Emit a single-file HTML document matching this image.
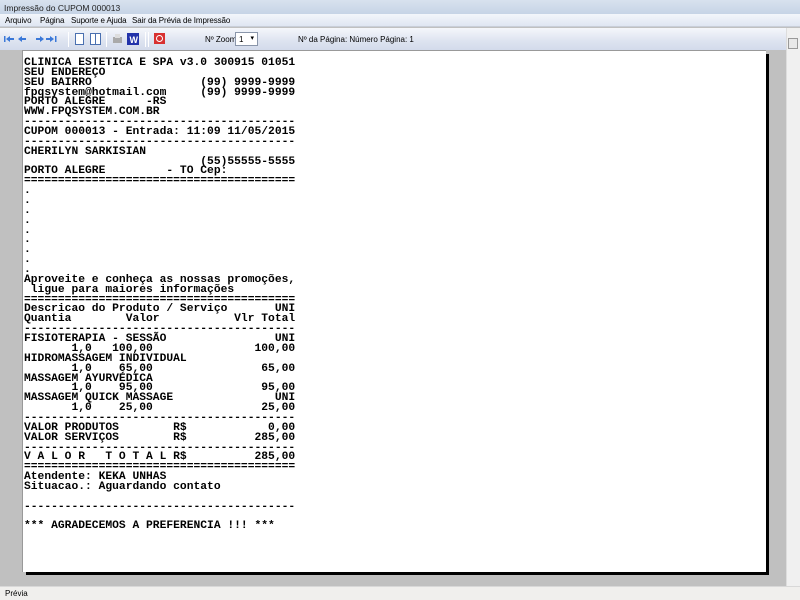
<!DOCTYPE html>
<html><head><meta charset="utf-8"><style>
*{margin:0;padding:0;box-sizing:border-box}
body{width:800px;height:600px;overflow:hidden;background:#c0c0c0;font-family:"Liberation Sans",sans-serif;font-size:8px;color:#000;position:relative}
.title{position:absolute;left:0;top:0;width:800px;height:14px;background:linear-gradient(#d8e2ee,#c6d4e6);font-size:8.5px;padding:3px 0 0 4px;color:#222}
.menu{position:absolute;left:0;top:14px;width:800px;height:13px;background:linear-gradient(#f3f6fb,#dfe6f2);border-bottom:1px solid #c8ced8}
.menu span{position:absolute;top:2px;letter-spacing:-0.1px}
.tb{position:absolute;left:0;top:28px;width:786px;height:22px;background:linear-gradient(#f5f7fb,#dde3f0 60%,#d3dbeb)}
.tb .i{position:absolute}
.sep{position:absolute;top:4px;width:1px;height:15px;background:#a9b4c8;border-right:1px solid #fff}
.area{position:absolute;left:0;top:50px;width:786px;height:536px;background:#c0c0c0}
.page{position:absolute;left:22px;top:50px;width:744px;height:522px;background:#fff;border-left:1px solid #999;border-top:1px solid #999}
.shr{position:absolute;left:766px;top:54px;width:3px;height:521px;background:#000}
.shb{position:absolute;left:26px;top:572px;width:743px;height:3px;background:#000}
pre{position:absolute;left:24px;top:59px;font-family:"Liberation Mono",monospace;font-weight:bold;font-size:11.3px;line-height:9.86px;color:#000}
.sb{position:absolute;left:786px;top:28px;width:14px;height:558px;background:#f0f0f0;border-left:1px solid #ddd}
.thumb{position:absolute;left:788px;top:38px;width:10px;height:11px;border:1px solid #999;background:#e8e8e8}
.status{position:absolute;left:0;top:586px;width:800px;height:14px;background:#f0efed;border-top:1px solid #d8d8d8;padding:2px 0 0 5px}
.sel{position:absolute;left:235px;top:4px;width:23px;height:14px;border:1px solid #8a96aa;background:#fff;font-size:8px;padding:2px 0 0 3px}
</style></head><body>
<div class="title">Impressão do CUPOM 000013</div>
<div class="menu"><span style="left:5px">Arquivo</span><span style="left:40px">Página</span><span style="left:71px">Suporte e Ajuda</span><span style="left:132px">Sair da Prévia de Impressão</span></div>
<div class="tb">
<svg class="i" style="left:3px;top:6px" width="56" height="10"><g fill="#3a78d8"><rect x="1" y="2" width="1.5" height="6"/><path d="M3 5l4-3v2h4v2H7v2z"/><path d="M15 5l4-3v2h4v2h-4v2z"/><path d="M41 5l-4-3v2h-4v2h4v2z"/><path d="M51 5l-4-3v2h-4v2h4v2z"/><rect x="52" y="2" width="1.5" height="6"/></g></svg>
<div class="sep" style="left:68px"></div>
<svg class="i" style="left:74px;top:4px" width="28" height="14"><rect x="1.5" y="1.5" width="8" height="11" fill="#fff" stroke="#4a70b0"/><rect x="16.5" y="1.5" width="10" height="11" fill="#fff" stroke="#4a70b0"/><line x1="21.5" y1="1.5" x2="21.5" y2="12.5" stroke="#4a70b0"/></svg>
<div class="sep" style="left:106px"></div>
<svg class="i" style="left:111px;top:4px" width="30" height="14"><rect x="2" y="5" width="9" height="6" fill="#aaa"/><rect x="4" y="2" width="5" height="4" fill="#ddd"/><rect x="16" y="1" width="12" height="12" fill="#2233aa"/><text x="18.5" y="11" font-size="9" fill="#fff" font-family="Liberation Sans" font-weight="bold">W</text></svg>
<div class="sep" style="left:145px"></div><div class="sep" style="left:148px"></div>
<svg class="i" style="left:153px;top:4px" width="14" height="14"><rect x="1" y="1" width="11" height="11" fill="#d83030"/><circle cx="6.5" cy="6.5" r="3" fill="none" stroke="#fff"/></svg>
<span class="i" style="left:205px;top:7px">Nº Zoom</span>
<div class="sel">1 <span style="position:absolute;right:3px;top:1px;font-size:7px">▾</span></div>
<span class="i" style="left:298px;top:7px">Nº da Página: Número Página: 1</span>
</div>
<div class="area"></div>
<div class="page"></div>
<div class="shr"></div><div class="shb"></div>
<pre>CLINICA ESTETICA E SPA v3.0 300915 01051
SEU ENDEREÇO
SEU BAIRRO                (99) 9999-9999
fpqsystem@hotmail.com     (99) 9999-9999
PORTO ALEGRE      -RS
WWW.FPQSYSTEM.COM.BR
----------------------------------------
CUPOM 000013 - Entrada: 11:09 11/05/2015
----------------------------------------
CHERILYN SARKISIAN
                          (55)55555-5555
PORTO ALEGRE         - TO Cep:
========================================
.
.
.
.
.
.
.
.
.
Aproveite e conheça as nossas promoções,
 ligue para maiores informações
========================================
Descricao do Produto / Serviço       UNI
Quantia        Valor           Vlr Total
----------------------------------------
FISIOTERAPIA - SESSÃO                UNI
       1,0   100,00               100,00
HIDROMASSAGEM INDIVIDUAL
       1,0    65,00                65,00
MASSAGEM AYURVÉDICA
       1,0    95,00                95,00
MASSAGEM QUICK MASSAGE               UNI
       1,0    25,00                25,00
----------------------------------------
VALOR PRODUTOS        R$            0,00
VALOR SERVIÇOS        R$          285,00
----------------------------------------
V A L O R   T O T A L R$          285,00
========================================
Atendente: KEKA UNHAS
Situacao.: Aguardando contato

----------------------------------------

*** AGRADECEMOS A PREFERENCIA !!! ***</pre>
<div class="sb"></div><div class="thumb"></div>
<div class="status">Prévia</div>
</body></html>
